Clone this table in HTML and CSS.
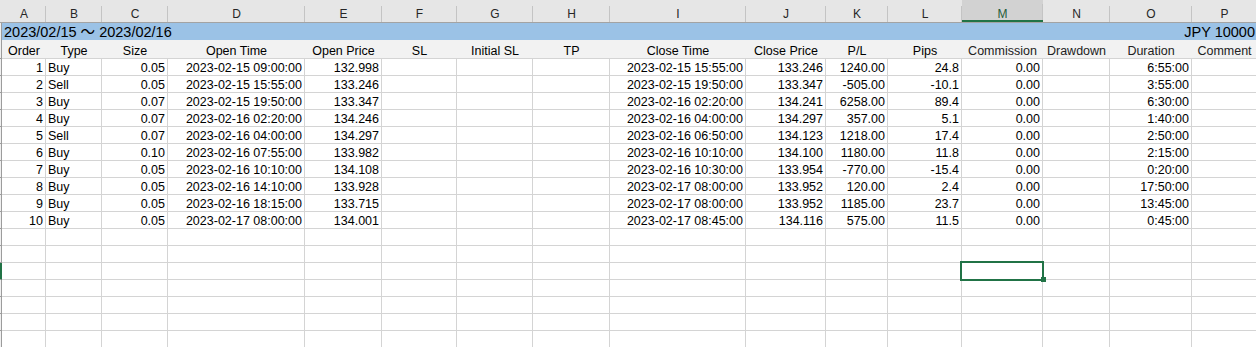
FILE: index.html
```html
<!DOCTYPE html>
<html lang="en">
<head>
<meta charset="utf-8">
<title>Trade history</title>
<link rel="stylesheet" href="styles.css">
</head>
<body>
<div class="sheet">
  <div class="row col-heads">
    <div class="strip"></div>
    <div class="ch">A</div><div class="ch">B</div><div class="ch">C</div><div class="ch">D</div>
    <div class="ch">E</div><div class="ch">F</div><div class="ch">G</div><div class="ch">H</div>
    <div class="ch">I</div><div class="ch">J</div><div class="ch">K</div><div class="ch">L</div>
    <div class="ch ch-active">M</div><div class="ch">N</div><div class="ch">O</div><div class="ch">P</div>
  </div>

  <div class="row title-row">
    <div class="strip"></div>
    <div class="title">
      <span>2023/02/15 ～ 2023/02/16</span>
      <span>JPY 10000</span>
    </div>
  </div>

  <div class="row heads">
    <div class="strip"></div>
    <div>Order</div><div>Type</div><div>Size</div><div>Open Time</div><div>Open Price</div>
    <div>SL</div><div>Initial SL</div><div>TP</div><div>Close Time</div><div>Close Price</div>
    <div>P/L</div><div>Pips</div><div class="light">Commission</div><div class="light">Drawdown</div>
    <div class="light">Duration</div><div class="light">Comment</div>
  </div>

  <div class="row data">
    <div class="strip"></div>
    <div class="n">1</div><div class="t">Buy</div><div class="n">0.05</div><div class="n">2023-02-15 09:00:00</div><div class="n">132.998</div>
    <div></div><div></div><div></div><div class="n">2023-02-15 15:55:00</div><div class="n">133.246</div>
    <div class="n">1240.00</div><div class="n">24.8</div><div class="n">0.00</div><div></div><div class="n">6:55:00</div><div></div>
  </div>
  <div class="row data">
    <div class="strip"></div>
    <div class="n">2</div><div class="t">Sell</div><div class="n">0.05</div><div class="n">2023-02-15 15:55:00</div><div class="n">133.246</div>
    <div></div><div></div><div></div><div class="n">2023-02-15 19:50:00</div><div class="n">133.347</div>
    <div class="n">-505.00</div><div class="n">-10.1</div><div class="n">0.00</div><div></div><div class="n">3:55:00</div><div></div>
  </div>
  <div class="row data">
    <div class="strip"></div>
    <div class="n">3</div><div class="t">Buy</div><div class="n">0.07</div><div class="n">2023-02-15 19:50:00</div><div class="n">133.347</div>
    <div></div><div></div><div></div><div class="n">2023-02-16 02:20:00</div><div class="n">134.241</div>
    <div class="n">6258.00</div><div class="n">89.4</div><div class="n">0.00</div><div></div><div class="n">6:30:00</div><div></div>
  </div>
  <div class="row data">
    <div class="strip"></div>
    <div class="n">4</div><div class="t">Buy</div><div class="n">0.07</div><div class="n">2023-02-16 02:20:00</div><div class="n">134.246</div>
    <div></div><div></div><div></div><div class="n">2023-02-16 04:00:00</div><div class="n">134.297</div>
    <div class="n">357.00</div><div class="n">5.1</div><div class="n">0.00</div><div></div><div class="n">1:40:00</div><div></div>
  </div>
  <div class="row data">
    <div class="strip"></div>
    <div class="n">5</div><div class="t">Sell</div><div class="n">0.07</div><div class="n">2023-02-16 04:00:00</div><div class="n">134.297</div>
    <div></div><div></div><div></div><div class="n">2023-02-16 06:50:00</div><div class="n">134.123</div>
    <div class="n">1218.00</div><div class="n">17.4</div><div class="n">0.00</div><div></div><div class="n">2:50:00</div><div></div>
  </div>
  <div class="row data">
    <div class="strip"></div>
    <div class="n">6</div><div class="t">Buy</div><div class="n">0.10</div><div class="n">2023-02-16 07:55:00</div><div class="n">133.982</div>
    <div></div><div></div><div></div><div class="n">2023-02-16 10:10:00</div><div class="n">134.100</div>
    <div class="n">1180.00</div><div class="n">11.8</div><div class="n">0.00</div><div></div><div class="n">2:15:00</div><div></div>
  </div>
  <div class="row data">
    <div class="strip"></div>
    <div class="n">7</div><div class="t">Buy</div><div class="n">0.05</div><div class="n">2023-02-16 10:10:00</div><div class="n">134.108</div>
    <div></div><div></div><div></div><div class="n">2023-02-16 10:30:00</div><div class="n">133.954</div>
    <div class="n">-770.00</div><div class="n">-15.4</div><div class="n">0.00</div><div></div><div class="n">0:20:00</div><div></div>
  </div>
  <div class="row data">
    <div class="strip"></div>
    <div class="n">8</div><div class="t">Buy</div><div class="n">0.05</div><div class="n">2023-02-16 14:10:00</div><div class="n">133.928</div>
    <div></div><div></div><div></div><div class="n">2023-02-17 08:00:00</div><div class="n">133.952</div>
    <div class="n">120.00</div><div class="n">2.4</div><div class="n">0.00</div><div></div><div class="n">17:50:00</div><div></div>
  </div>
  <div class="row data">
    <div class="strip"></div>
    <div class="n">9</div><div class="t">Buy</div><div class="n">0.05</div><div class="n">2023-02-16 18:15:00</div><div class="n">133.715</div>
    <div></div><div></div><div></div><div class="n">2023-02-17 08:00:00</div><div class="n">133.952</div>
    <div class="n">1185.00</div><div class="n">23.7</div><div class="n">0.00</div><div></div><div class="n">13:45:00</div><div></div>
  </div>
  <div class="row data">
    <div class="strip"></div>
    <div class="n">10</div><div class="t">Buy</div><div class="n">0.05</div><div class="n">2023-02-17 08:00:00</div><div class="n">134.001</div>
    <div></div><div></div><div></div><div class="n">2023-02-17 08:45:00</div><div class="n">134.116</div>
    <div class="n">575.00</div><div class="n">11.5</div><div class="n">0.00</div><div></div><div class="n">0:45:00</div><div></div>
  </div>

  <div class="row data">
    <div class="strip"></div>
    <div></div><div></div><div></div><div></div><div></div><div></div><div></div><div></div>
    <div></div><div></div><div></div><div></div><div></div><div></div><div></div><div></div>
  </div>
  <div class="row data">
    <div class="strip"></div>
    <div></div><div></div><div></div><div></div><div></div><div></div><div></div><div></div>
    <div></div><div></div><div></div><div></div><div></div><div></div><div></div><div></div>
  </div>
  <div class="row data">
    <div class="strip strip-active"></div>
    <div></div><div></div><div></div><div></div><div></div><div></div><div></div><div></div>
    <div></div><div></div><div></div><div></div><div class="selected"></div><div></div><div></div><div></div>
  </div>
  <div class="row data">
    <div class="strip"></div>
    <div></div><div></div><div></div><div></div><div></div><div></div><div></div><div></div>
    <div></div><div></div><div></div><div></div><div></div><div></div><div></div><div></div>
  </div>
  <div class="row data">
    <div class="strip"></div>
    <div></div><div></div><div></div><div></div><div></div><div></div><div></div><div></div>
    <div></div><div></div><div></div><div></div><div></div><div></div><div></div><div></div>
  </div>
  <div class="row data">
    <div class="strip"></div>
    <div></div><div></div><div></div><div></div><div></div><div></div><div></div><div></div>
    <div></div><div></div><div></div><div></div><div></div><div></div><div></div><div></div>
  </div>
  <div class="row data">
    <div class="strip"></div>
    <div></div><div></div><div></div><div></div><div></div><div></div><div></div><div></div>
    <div></div><div></div><div></div><div></div><div></div><div></div><div></div><div></div>
  </div>
</div>
</body>
</html>
```
FILE: styles.css
```css
html, body {
  margin: 0;
  padding: 0;
  background: #fff;
}

body {
  width: 1256px;
  height: 347px;
  overflow: hidden;
  font-family: "Liberation Sans", Arial, "Noto Sans CJK JP", sans-serif;
  color: #000;
}

.sheet {
  width: 1257px;
}

/* one grid track per spreadsheet column; each width includes its 1px right gridline */
.row {
  display: grid;
  grid-template-columns: 2px 44px 56px 66px 137px 77px 75px 76px 77px 136px 80px 62px 74px 81px 67px 82px 65px;
}

.row > div {
  box-sizing: border-box;
  white-space: nowrap;
  overflow: hidden;
}

/* row-number strip along the left edge */
.strip {
  background: #f0f0f0;
  border-right: 1px solid #9c9c9c;
}

/* column letters */
.col-heads {
  height: 23px;
  background: #e6e6e6;
  border-bottom: 1px solid #a3a3a3;
  box-sizing: border-box;
}

.col-heads .strip {
  background: #e6e6e6;
  border-right: 0;
}

.ch {
  height: 22px;
  padding-top: 7px;
  line-height: 15px;
  font-size: 12px;
  text-align: center;
  color: #262626;
  background-image: linear-gradient(#c4c4c4, #c4c4c4);
  background-repeat: no-repeat;
  background-position: right bottom;
  background-size: 1px 16px;
}

.ch-active {
  background-color: #d2d2d2;
  color: #1f5d39;
  border-bottom: 2px solid #217346;
}

/* blue title band */
.title-row {
  height: 17px;
}

.title {
  grid-column: 2 / -1;
  display: flex;
  justify-content: space-between;
  background: #9bc2e6;
  padding: 2px 2px 0 2px;
  font-size: 14.5px;
  line-height: 15px;
  color: #000;
}

/* field names */
.heads > div {
  height: 19px;
  padding-top: 4px;
  line-height: 14px;
  font-size: 12.5px;
  text-align: center;
  background: #f2f2f2;
  border-bottom: 1px solid #d4d4d4;
}

.heads > .strip {
  background: #f0f0f0;
  border-bottom: 1px solid #9c9c9c;
}

.heads .light {
  color: #222;
}

/* data cells */
.data > div {
  height: 17px;
  padding-top: 2px;
  line-height: 14px;
  font-size: 12.5px;
  border-right: 1px solid #d4d4d4;
  border-bottom: 1px solid #d4d4d4;
}

.data > .strip {
  border-right: 1px solid #9c9c9c;
  border-bottom: 1px solid #9c9c9c;
}

.data > .strip-active {
  background: #217346;
  border-right-color: #217346;
}

.n {
  text-align: right;
  padding-right: 2px;
}

.t {
  text-align: left;
  padding-left: 2px;
}

/* active cell frame with its fill handle */
.data > .selected {
  position: relative;
  overflow: visible;
}

.selected::after {
  content: "";
  position: absolute;
  left: -2px;
  right: -2px;
  top: -2px;
  bottom: -2px;
  border: 2px solid #217346;
}

.selected::before {
  content: "";
  position: absolute;
  width: 5px;
  height: 5px;
  right: -4px;
  bottom: -3px;
  background: #217346;
  z-index: 1;
}
```
